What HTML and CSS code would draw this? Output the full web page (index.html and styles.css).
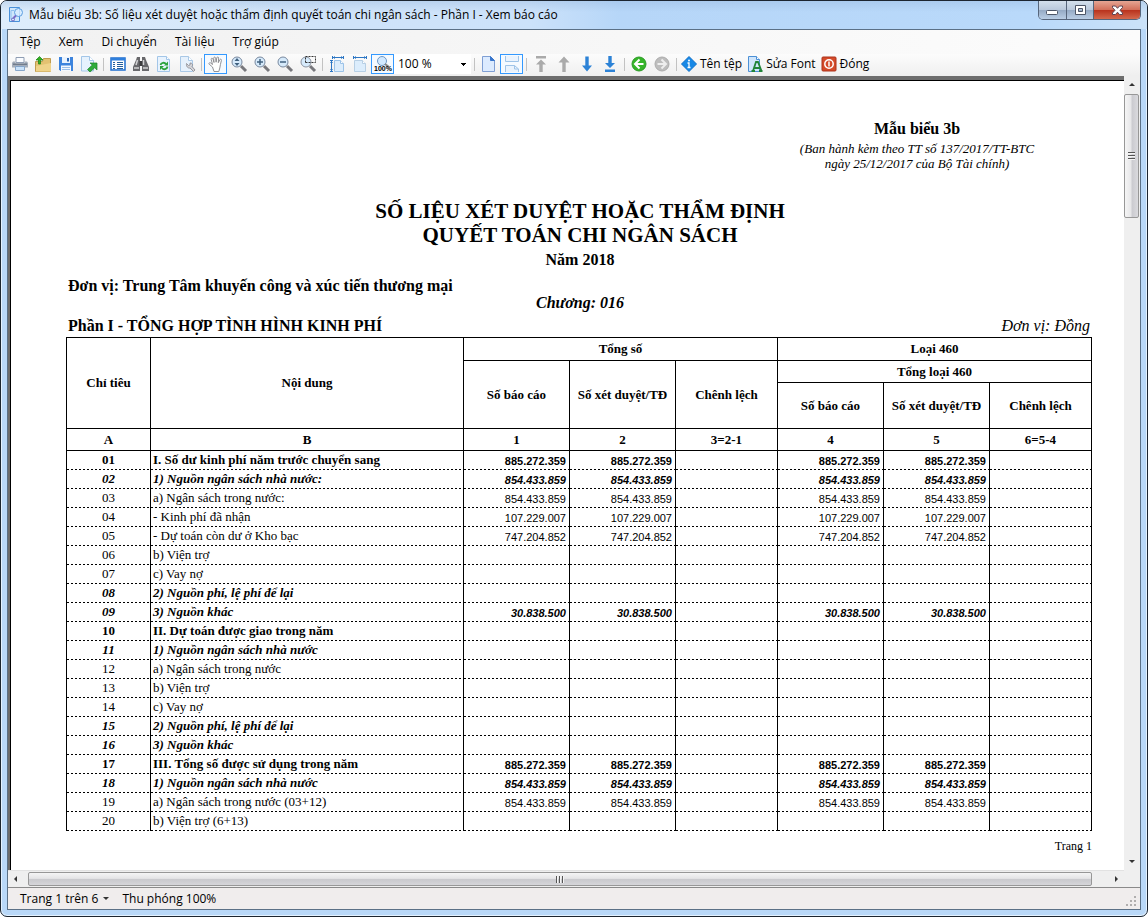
FILE: index.html
```html
<!DOCTYPE html>
<html lang="vi">
<head>
<meta charset="utf-8">
<title>Mẫu biểu 3b - Xem báo cáo</title>
<link rel="stylesheet" href="styles.css">
</head>
<body>
<div class="window">
  <header class="titlebar">
    <svg class="app-icon" viewBox="0 0 16 16" aria-hidden="true"><path d="M1.500.5h10v14h-10z" fill="#cfe6fb" stroke="#4a90d9"/><path d="M3 12.500v-9h3" fill="none" stroke="#8dbfee"/><circle cx="10.500" cy="5.500" r="4" fill="#d8ecff" fill-opacity=".8" stroke="#5c9ee0"/><path d="M8 8.500L5.500 11" stroke="#7a6bc8" stroke-width="2"/><circle cx="5" cy="12.500" r="1.500" fill="none" stroke="#6b62c0"/></svg>
    <h1 class="title">Mẫu biểu 3b: Số liệu xét duyệt hoặc thẩm định quyết toán chi ngân sách - Phần I - Xem báo cáo</h1>
    <div class="captions">
      <button class="cap cap-min" aria-label="Thu nhỏ"><svg viewBox="0 0 13 11"><rect x=".5" y="5.500" width="11" height="4" rx="1" fill="#fff" stroke="#4c5566"/></svg></button>
      <button class="cap cap-max" aria-label="Phóng to"><svg viewBox="0 0 13 11"><path fill-rule="evenodd" d="M1.500.5h10v9h-10zM4.500 3.500v3h4v-3z" fill="#fff" stroke="#4c5566"/></svg></button>
      <button class="cap cap-close" aria-label="Đóng cửa sổ"><svg viewBox="0 0 13 11"><path d="M1.500 1h3l2 2.300L8.500 1h3v1.500L9 5.300l2.500 2.700v1.500h-3l-2-2.300-2 2.300h-3V8L4 5.300 1.500 2.500z" fill="#fff" stroke="#5c4250"/></svg></button>
    </div>
  </header>

  <main class="client">
    <nav class="menubar" aria-label="Trình đơn">
      <button class="menu">Tệp</button><button class="menu">Xem</button><button class="menu">Di chuyển</button><button class="menu">Tài liệu</button><button class="menu">Trợ giúp</button>
    </nav>

    <div class="toolbar" role="toolbar" aria-label="Công cụ">
      <button class="tool" aria-label="In"><svg viewBox="0 0 16 16"><path d="M4 1.500h8v5H4z" fill="#fafcff" stroke="#8f9db3"/><path d="M1 5.500h2.500v2h9v-2H15l1 1.500v4.500H0V7z" fill="#a4adba"/><path d="M1 7.500h14v1.500H1z" fill="#717c8c"/><path d="M3.500 10.500h9v4h-9z" fill="#c9e2fa" stroke="#86a6ca"/></svg></button>
      <button class="tool" aria-label="Mở"><svg viewBox="0 0 16 16"><path d="M.5 5.500h7l1-3h7v13H.5z" fill="#e3c272" stroke="#c09c50"/><path d="M1 10l15-3v8.500H1z" fill="#efd38a"/><path d="M3.500 8V4H1L4.500.5 8 4H5.500v4z" fill="#35b022" stroke="#168011" stroke-width=".7"/></svg></button>
      <button class="tool" aria-label="Lưu"><svg viewBox="0 0 16 16"><path d="M1 1h14v14H2.500L1 13.500z" fill="#3d84dd"/><path d="M4 1h8v6H4z" fill="#e9f3fe"/><path d="M9 2h2v3.500H9z" fill="#2766b8"/><path d="M3 9.500h10V15H3z" fill="#f4f8fd"/><path d="M4 11.500h8M4 13.500h8" stroke="#9bbfe8"/></svg></button>
      <button class="tool" aria-label="Xuất"><svg viewBox="0 0 16 16"><path d="M.5.500h8l4 4v10.500H.5z" fill="#e6f2fd" stroke="#a3c6e8"/><path d="M8.500.5v4h4" fill="#fff" stroke="#a3c6e8"/><path d="M9 7h7v7l-2.300-2.200L9 16l-2.500-2.500 4.800-4.500z" fill="#2fac3a" stroke="#188327" stroke-width=".7"/></svg></button>
      <span class="sep"></span>
      <button class="tool" aria-label="Mục lục"><svg viewBox="0 0 16 16"><path d="M1 2h14v12H1z" fill="#fff" stroke="#1f6fd0" stroke-width="1.500"/><path d="M1 2h14v2.500H1z" fill="#2f7fdc"/><path d="M3 6.500h2M3 8.500h2M3 10.500h2M3 12.500h2M7 6.500h6M7 8.500h6M7 10.500h6M7 12.500h6" stroke="#255f9d"/></svg></button>
      <button class="tool" aria-label="Tìm"><svg viewBox="0 0 16 16"><path d="M4 1h3v14H0v-4l3-7zM9 1h3l1 3 3 7v4H9z" fill="#68686b"/><path d="M6.500 5h3v5h-3z" fill="#3c3c3e"/><path d="M4.500 4L3 9M10.500 4v5M1 12h5M10 12h5" stroke="#d2d2d4" stroke-width="1.500"/></svg></button>
      <button class="tool" aria-label="Làm mới"><svg viewBox="0 0 16 16"><path d="M1.500.5h9l3 3v12h-12z" fill="#e8f3fe" stroke="#a3c6e8"/><path d="M10.500.5v3h3" fill="#fff" stroke="#a3c6e8"/><path d="M4.500 9c.5-2.500 4-3 5.500-1M11.500 10.500c-.5 3-4 3.500-5.500 1.500" fill="none" stroke="#2ba33b" stroke-width="1.800"/><path d="M12 5.500v4H8zM4 14v-4h4z" fill="#2ba33b"/></svg></button>
      <button class="tool" aria-label="Thiết lập trang"><svg viewBox="0 0 16 16"><path d="M1.500.5h8l4 4v11h-12z" fill="#e6f1fc" stroke="#a9c8e6"/><path d="M9.500.5v4h4" fill="#fff" stroke="#a9c8e6"/><path d="M7.500 7.500l2 2L11 9V7c3 0 3 2.500 2 3.500l3 3.500-1.500 1.500-3.500-3.500c-2 .5-4-1.500-3.500-4.500z" fill="#d4d4d8" stroke="#85858b" stroke-width=".8"/></svg></button>
      <span class="sep"></span>
      <button class="tool on" aria-label="Kéo" aria-pressed="true"><svg viewBox="0 0 16 16"><path d="M4.500 11L1.200 8.200c-.8-1 .4-2 1.500-1.200L4.500 8.500 3.200 3.500c-.3-1.500 1.300-1.800 1.800-.4l1 3.400-.3-4.300c0-1.500 1.700-1.500 1.900 0l.5 4 .7-4.400c.4-1.300 1.900-1 1.800.3l-.3 4.600 1.500-3c.7-1.100 2-.4 1.600.8-.8 2.700-1.200 5.300-1.600 7.500l-1 3.500H6z" fill="#fff" stroke="#86868a" stroke-width=".9"/></svg></button>
      <button class="tool" aria-label="Thu phóng động"><svg viewBox="0 0 16 16"><path d="M10 10l5 5" stroke="#77777c" stroke-width="3"/><circle cx="6" cy="6" r="5" fill="#d6eafb" stroke="#78889e"/><path d="M6 2l2.500 3h-5zM6 10l2.500-3h-5z" fill="#41617f"/></svg></button>
      <button class="tool" aria-label="Phóng to trang"><svg viewBox="0 0 16 16"><path d="M10 10l5 5" stroke="#77777c" stroke-width="3"/><circle cx="6" cy="6" r="5" fill="#d6eafb" stroke="#78889e"/><path d="M3 6h6M6 3v6" stroke="#41617f" stroke-width="1.500"/></svg></button>
      <button class="tool" aria-label="Thu nhỏ trang"><svg viewBox="0 0 16 16"><path d="M10 10l5 5" stroke="#77777c" stroke-width="3"/><circle cx="6" cy="6" r="5" fill="#d6eafb" stroke="#78889e"/><path d="M3 6h6" stroke="#41617f" stroke-width="1.500"/></svg></button>
      <button class="tool" aria-label="Phóng vùng chọn"><svg viewBox="0 0 16 16"><path d="M10 10l5 5" stroke="#77777c" stroke-width="3"/><circle cx="6" cy="6" r="5" fill="#d6eafb" stroke="#8b93a0"/><path d="M5.500 6.500v-6h10v6z" fill="none" stroke="#333" stroke-dasharray="2 1"/></svg></button>
      <span class="sep"></span>
      <button class="tool" aria-label="Vừa trang"><svg viewBox="0 0 16 16"><path d="M5.500 4.500h6l3 3v8h-9z" fill="#dcedfc" stroke="#9cc3e8"/><path d="M11.500 4.500v3h3" fill="#fff" stroke="#9cc3e8"/><path d="M3 1.500h11M2.500 4v11" stroke="#2c76c4"/><path d="M3.500 0v3M14.500 0v3M1 4.500h3M1 15.500h3" stroke="#2c76c4"/><path d="M6 0v3L4 1.500zM12 0v3l2-1.500zM1 7h3L2.500 5zM1 13h3l-1.500 2z" fill="#2c76c4"/></svg></button>
      <button class="tool" aria-label="Vừa chiều rộng"><svg viewBox="0 0 16 16"><path d="M2.500 4.500h8l3 3v8h-11z" fill="#dcedfc" stroke="#b7cfe4"/><path d="M10.500 4.500v3h3" fill="#fff" stroke="#b7cfe4"/><path d="M2 1.500h12M1.500 0v3M14.500 0v3" stroke="#2c76c4"/><path d="M4 0v3L2 1.500zM12 0v3l2-1.500z" fill="#2c76c4"/></svg></button>
      <button class="tool on" aria-label="Kích thước thật" aria-pressed="true"><svg viewBox="0 0 16 16"><circle cx="7" cy="5" r="4.500" fill="#d2e9ff" stroke="#6f98c4"/><path d="M10 8l4 3" stroke="#888" stroke-width="2"/><text class="tiny" x="8" y="15">100%</text></svg></button>
      <select class="zoom" aria-label="Mức thu phóng"><option>100 %</option></select>
      <span class="sep"></span>
      <button class="tool" aria-label="Một trang"><svg viewBox="0 0 16 16"><path d="M1.500.5h8l4 4v11h-12z" fill="#dcebff" stroke="#7f9fd4"/><path d="M9.500.5v4h4z" fill="#3976cc" stroke="#3976cc"/></svg></button>
      <button class="tool on" aria-label="Cuộn liên tục" aria-pressed="true"><svg viewBox="0 0 16 16"><path d="M1.500 0v5.500h13V0M1.500 16V9.500h9l4 3.500v3" fill="#eaf3fd" stroke="#9fc4e8"/><path d="M10.500 9.500V13h4" fill="none" stroke="#9fc4e8"/></svg></button>
      <span class="sep"></span>
      <button class="tool" aria-label="Trang đầu"><svg viewBox="0 0 16 16"><path d="M3 0h10v2.500H3zM8 3.500l5 5h-3.300V16H6.300V8.500H3z" fill="#aaa"/></svg></button>
      <button class="tool" aria-label="Trang trước"><svg viewBox="0 0 16 16"><path d="M8 .5l5.500 6h-3.800v9.500H6.300V6.500H2.500z" fill="#aaa"/></svg></button>
      <button class="tool" aria-label="Trang sau"><svg viewBox="0 0 16 16"><path d="M8 15.500L3 9.500h3.300V.5h3.400v9H13z" fill="#2c82d6"/></svg></button>
      <button class="tool" aria-label="Trang cuối"><svg viewBox="0 0 16 16"><path d="M8 12L3 7h3.300V0h3.400v7H13zM3 13.500h10V16H3z" fill="#2c82d6"/></svg></button>
      <span class="sep"></span>
      <button class="tool" aria-label="Lùi"><svg viewBox="0 0 16 16"><circle cx="8" cy="8" r="7" fill="#35b529" stroke="#2a9a24"/><path d="M8.500 3.500L4 8l4.500 4.500M4 8h8.500" fill="none" stroke="#fff" stroke-width="2"/></svg></button>
      <button class="tool" aria-label="Tiến"><svg viewBox="0 0 16 16"><circle cx="8" cy="8" r="7" fill="#bdbdbd" stroke="#acacac"/><path d="M7.500 3.500L12 8l-4.500 4.500M12 8H3.500" fill="none" stroke="#eee" stroke-width="2"/></svg></button>
      <span class="sep"></span>
      <button class="tool labeled"><svg viewBox="0 0 16 16"><path d="M8 .5L15.500 8 8 15.500.5 8z" fill="#1788e6" stroke="#0c6fc9"/><path d="M6.500 7H8v4.500M6.500 11.500h3" fill="none" stroke="#fff" stroke-width="1.300"/><circle cx="8" cy="4.500" r="1" fill="#fff"/></svg>Tên tệp</button>
      <button class="tool labeled"><svg viewBox="0 0 16 16"><path d="M1.500.5h8l3 3v12h-11z" fill="#cfe5fb" stroke="#4c90d6"/><path d="M9.500.5v3h3" fill="#fff" stroke="#4c90d6"/><path d="M6 15l3-9h2l3.500 9M7.500 12h5.500M4.500 15H8M12 15h3.500" fill="none" stroke="#218438" stroke-width="1.800"/></svg>Sửa Font</button>
      <button class="tool labeled"><svg viewBox="0 0 16 16"><rect x="1" y="1" width="14" height="14" rx="1" fill="#d44b2a" stroke="#ac321a"/><circle cx="8" cy="8" r="4.200" fill="none" stroke="#fff" stroke-width="1.500"/><path d="M8 5.500v5" stroke="#fff" stroke-width="1.500"/></svg>Đóng</button>
    </div>

    <div class="viewer">
      <article class="page">
        <div class="issued">
          <strong class="form-no">Mẫu biểu 3b</strong>
          <em>(Ban hành kèm theo TT số 137/2017/TT-BTC<br>ngày 25/12/2017 của Bộ Tài chính)</em>
        </div>
        <h2 class="heading">SỐ LIỆU XÉT DUYỆT HOẶC THẨM ĐỊNH<br>QUYẾT TOÁN CHI NGÂN SÁCH</h2>
        <p class="year">Năm 2018</p>
        <p class="unit">Đơn vị: Trung Tâm khuyến công và xúc tiến thương mại</p>
        <p class="chapter">Chương: 016</p>
        <div class="part"><h3 class="part-title">Phần I - TỔNG HỢP TÌNH HÌNH KINH PHÍ</h3><em class="currency">Đơn vị: Đồng</em></div>
        <table class="report">
          <colgroup><col class="c-code"><col><col class="c-num"><col class="c-num"><col class="c-diff"><col class="c-num"><col class="c-num"><col class="c-diff"></colgroup>
          <thead>
            <tr class="h1"><th rowspan="3">Chỉ tiêu</th><th rowspan="3">Nội dung</th><th colspan="3">Tổng số</th><th colspan="3">Loại 460</th></tr>
            <tr class="h2"><th rowspan="2">Số báo cáo</th><th rowspan="2">Số xét duyệt/TĐ</th><th rowspan="2">Chênh lệch</th><th colspan="3">Tổng loại 460</th></tr>
            <tr class="h3"><th>Số báo cáo</th><th>Số xét duyệt/TĐ</th><th>Chênh lệch</th></tr>
            <tr class="h2"><th>A</th><th>B</th><th>1</th><th>2</th><th>3=2-1</th><th>4</th><th>5</th><th>6=5-4</th></tr>
          </thead>
          <tbody>
            <tr class="b"><td>01</td><td>I. Số dư kinh phí năm trước chuyển sang</td><td>885.272.359</td><td>885.272.359</td><td></td><td>885.272.359</td><td>885.272.359</td><td></td></tr>
            <tr class="bi"><td>02</td><td>1) Nguồn ngân sách nhà nước:</td><td>854.433.859</td><td>854.433.859</td><td></td><td>854.433.859</td><td>854.433.859</td><td></td></tr>
            <tr><td>03</td><td>a) Ngân sách trong nước:</td><td>854.433.859</td><td>854.433.859</td><td></td><td>854.433.859</td><td>854.433.859</td><td></td></tr>
            <tr><td>04</td><td>- Kinh phí đã nhận</td><td>107.229.007</td><td>107.229.007</td><td></td><td>107.229.007</td><td>107.229.007</td><td></td></tr>
            <tr><td>05</td><td>- Dự toán còn dư ở Kho bạc</td><td>747.204.852</td><td>747.204.852</td><td></td><td>747.204.852</td><td>747.204.852</td><td></td></tr>
            <tr><td>06</td><td>b) Viện trợ</td><td></td><td></td><td></td><td></td><td></td><td></td></tr>
            <tr><td>07</td><td>c) Vay nợ</td><td></td><td></td><td></td><td></td><td></td><td></td></tr>
            <tr class="bi"><td>08</td><td>2) Nguồn phí, lệ phí để lại</td><td></td><td></td><td></td><td></td><td></td><td></td></tr>
            <tr class="bi"><td>09</td><td>3) Nguồn khác</td><td>30.838.500</td><td>30.838.500</td><td></td><td>30.838.500</td><td>30.838.500</td><td></td></tr>
            <tr class="b"><td>10</td><td>II. Dự toán được giao trong năm</td><td></td><td></td><td></td><td></td><td></td><td></td></tr>
            <tr class="bi"><td>11</td><td>1) Nguồn ngân sách nhà nước</td><td></td><td></td><td></td><td></td><td></td><td></td></tr>
            <tr><td>12</td><td>a) Ngân sách trong nước</td><td></td><td></td><td></td><td></td><td></td><td></td></tr>
            <tr><td>13</td><td>b) Viện trợ</td><td></td><td></td><td></td><td></td><td></td><td></td></tr>
            <tr><td>14</td><td>c) Vay nợ</td><td></td><td></td><td></td><td></td><td></td><td></td></tr>
            <tr class="bi"><td>15</td><td>2) Nguồn phí, lệ phí để lại</td><td></td><td></td><td></td><td></td><td></td><td></td></tr>
            <tr class="bi"><td>16</td><td>3) Nguồn khác</td><td></td><td></td><td></td><td></td><td></td><td></td></tr>
            <tr class="b"><td>17</td><td>III. Tổng số được sử dụng trong năm</td><td>885.272.359</td><td>885.272.359</td><td></td><td>885.272.359</td><td>885.272.359</td><td></td></tr>
            <tr class="bi"><td>18</td><td>1) Nguồn ngân sách nhà nước</td><td>854.433.859</td><td>854.433.859</td><td></td><td>854.433.859</td><td>854.433.859</td><td></td></tr>
            <tr><td>19</td><td>a) Ngân sách trong nước (03+12)</td><td>854.433.859</td><td>854.433.859</td><td></td><td>854.433.859</td><td>854.433.859</td><td></td></tr>
            <tr><td>20</td><td>b) Viện trợ (6+13)</td><td></td><td></td><td></td><td></td><td></td><td></td></tr>
          </tbody>
        </table>
        <p class="page-no">Trang 1</p>
      </article>
      <div class="vbar"><span class="arrow up"></span><div class="vtrack"><div class="vthumb"><span class="grip"></span></div></div><span class="arrow down"></span></div>
      <div class="hbar"><span class="arrow left"></span><div class="hthumb"><span class="grip upright"></span></div><span class="arrow right"></span></div>
      <div class="corner"></div>
    </div>

    <footer class="status">
      <button class="pager">Trang 1 trên 6<span class="arrow down"></span></button>
      <span>Thu phóng 100%</span>
      <svg class="size-grip" viewBox="0 0 12 12" aria-hidden="true"><path d="M8 0h2v2H8zM4 4h2v2H4zM8 4h2v2H8zM0 8h2v2H0zM4 8h2v2H4zM8 8h2v2H8z" fill="#b0aeae"/></svg>
    </footer>
  </main>
</div>
</body>
</html>
```
FILE: styles.css
```css
* { box-sizing: border-box; }
body {
  margin: 0;
  background: #fff;
  color: #000;
  font: 12px/16px "Open Sans", "Noto Sans", sans-serif;
}
h1, h2, h3, p { margin: 0; }
button, select {
  margin: 0;
  padding: 0;
  border: 0;
  background: none;
  color: inherit;
  font: inherit;
}
svg { display: block; }

.window {
  display: flex;
  flex-direction: column;
  min-height: 100vh;
  padding: 0 6px 6px;
  border: 1px solid #1c2530;
  border-radius: 7px;
  background: #b9d8f8;
  box-shadow: inset 0 0 0 1px #e4f2ff;
}

/* Title bar */
.titlebar {
  display: flex;
  align-items: center;
  height: 28px;
  margin: 0 -6px;
  padding: 0 6px 0 7px;
  border-radius: 6px 6px 0 0;
  background:
    linear-gradient(#8fb0d855, #b9d8f800 40%),
    linear-gradient(90deg, #deedfc, #cfe3f9 30%, #cce2fa 46%, #b6d6f8 54%, #b9d9fa 90%, #cbe2f8);
}
.app-icon { width: 16px; height: 16px; margin-right: 5px; }
.title { flex: 1; font-size: 12px; font-weight: 400; white-space: nowrap; overflow: hidden; }
.captions {
  display: flex;
  align-self: flex-start;
  border: 1px solid #56657b;
  border-top: 0;
  border-radius: 0 0 5px 5px;
  overflow: hidden;
}
.cap {
  display: grid;
  place-items: center;
  width: 27px;
  height: 18px;
  background: linear-gradient(#d3dfec, #bac9dc 48%, #94a9c4 50%, #b9cde4);
}
.cap + .cap { border-left: 1px solid #56657b; }
.cap svg { width: 13px; height: 11px; }
.cap-close { width: 47px; background: linear-gradient(#e5a593, #d2705b 48%, #b8311c 50%, #d4694d); }

/* Client area */
.client {
  flex: 1;
  display: flex;
  flex-direction: column;
  border: 1px solid #5b7086;
  background: #f0eded;
}
.menubar {
  display: flex;
  height: 24px;
  padding-left: 3px;
  background: linear-gradient(90deg, #f1f1f1, #fcfcfc);
}
.menu { padding: 0 9px; }
.toolbar {
  display: flex;
  align-items: center;
  height: 22px;
  padding-bottom: 2px;
  background: linear-gradient(#fcfcfc, #efefef);
}
.tool {
  flex: none;
  display: flex;
  align-items: center;
  justify-content: center;
  width: 23px;
  height: 20px;
}
.tool svg { width: 16px; height: 16px; overflow: visible; }
.on { border: 1px solid #3399ff; background: #f5faff; }
.labeled { width: auto; gap: 3px; padding: 0 3px 0 2px; white-space: nowrap; }
.sep { width: 1px; height: 13px; margin: 0 2px 0 3px; background: #c2c2c2; }
.tiny { font: bold 7px "Liberation Sans", sans-serif; text-anchor: middle; }
.zoom {
  appearance: none;
  width: 77px;
  height: 20px;
  padding-left: 4px;
  background:
    linear-gradient(#000, #000) 67px 9px / 5px 1px no-repeat,
    linear-gradient(#000, #000) 68px 10px / 3px 1px no-repeat,
    linear-gradient(#000, #000) 69px 11px / 1px 1px no-repeat,
    #fff;
}

/* Document viewer */
.viewer {
  flex: 1;
  display: grid;
  grid-template-columns: 1fr 16px;
  grid-template-rows: 1fr 17px;
  background: #efefef;
}
.page {
  padding: 38px 32px 14px 56px;
  border-top: 4px solid #6d6d6d;
  border-left: 2px solid #6d6d6d;
  box-shadow: inset 1px 1px #000;
  background: #fff;
  font-family: "Liberation Serif", serif;
}
.issued {
  display: flex;
  flex-direction: column;
  width: 350px;
  margin-left: auto;
  text-align: center;
  font-size: 13px;
  line-height: 15px;
}
.form-no { font-size: 16px; line-height: 22px; margin-bottom: 1px; }
.heading {
  margin-top: 28px;
  padding-left: 2px;
  text-align: center;
  font-size: 21px;
  line-height: 24px;
}
.year {
  padding: 1px 0 0 2px;
  text-align: center;
  font-size: 16px;
  font-weight: 700;
  line-height: 24px;
}
.unit { font-size: 16px; font-weight: 700; line-height: 28px; padding-left: 2px; }
.chapter { padding-left: 2px; text-align: center; font-size: 16px; font-weight: 700; font-style: italic; line-height: 6px; }
.part { display: flex; justify-content: space-between; align-items: flex-end; padding: 9px 2px 0 2px; font-size: 16px; line-height: 22px; }
.part-title { font-size: 16px; }

.report {
  width: 100%;
  table-layout: fixed;
  border-spacing: 0;
  border-top: 1px solid #000;
  border-right: 1px solid #000;
  font-size: 13px;
  line-height: 16px;
}
.c-code { width: 84px; }
.c-num { width: 106px; }
.c-diff { width: 102px; }
.report th, .report td { padding: 0; border-left: 1px solid #000; }
.report th { border-bottom: 1px solid #000; white-space: nowrap; }
.h1 { height: 23px; }
.h2 { height: 22px; }
.h3 { height: 46px; }
.report td {
  height: 19px;
  padding: 1px 3px 0;
  text-align: right;
  font-family: "Liberation Sans Narrow", "Liberation Sans", sans-serif;
  font-size: 11px;
  background: repeating-linear-gradient(90deg, #000 0 2px, #fff 2px 4px) 0 100% / 100% 1px no-repeat;
}
.report td:nth-child(-n+2) {
  padding: 0 2px 1px;
  text-align: left;
  font-family: "Liberation Serif", serif;
  font-size: 13px;
}
.report td:first-child { text-align: center; }
.b td { font-weight: 700; }
.bi td { font-weight: 700; font-style: italic; }
.page-no { margin-top: 7px; text-align: right; font-size: 12px; line-height: 16px; }

/* Scroll bars */
.arrow { width: 0; height: 0; border: 3px solid transparent; }
.up { border-top: 0; border-bottom-color: #333; }
.down { border-bottom: 0; border-top-color: #333; }
.left { border-left: 0; border-right-color: #333; }
.right { border-right: 0; border-left-color: #333; }
.vbar { display: flex; flex-direction: column; align-items: center; padding: 7px 0; background: #efefef; }
.vtrack { flex: 1; align-self: stretch; padding: 8px 1px 8px 0; }
.vthumb, .hthumb {
  display: grid;
  place-items: center;
  border: 1px solid #979797;
  border-radius: 2px;
}
.vthumb { height: 124px; background: linear-gradient(90deg, #f5f5f5, #e7e7e9 45%, #cbcbd0 55%, #dadade); }
.hbar { display: flex; align-items: center; padding: 1px 6px; border-top: 1px solid #e2e2e2; }
.hthumb { flex: 1; height: 14px; margin: 0 23px 0 11px; background: linear-gradient(#f5f5f5, #e5e5e7 45%, #c9c9cd 55%, #d6d6da); }
.grip { width: 7px; height: 8px; background: repeating-linear-gradient(#555 0 1px, #f5f5f5 1px 2px, transparent 2px 3px); }
.upright { width: 8px; height: 7px; background: repeating-linear-gradient(90deg, #555 0 1px, #f5f5f5 1px 2px, transparent 2px 3px); }

/* Status bar */
.status {
  display: flex;
  align-items: center;
  gap: 13px;
  height: 22px;
  padding-left: 12px;
  border-top: 1px solid #8a8a8a;
  white-space: nowrap;
}
.pager { display: flex; align-items: center; gap: 5px; }
.size-grip { width: 12px; height: 12px; margin: 6px 2px 0 auto; }
```
